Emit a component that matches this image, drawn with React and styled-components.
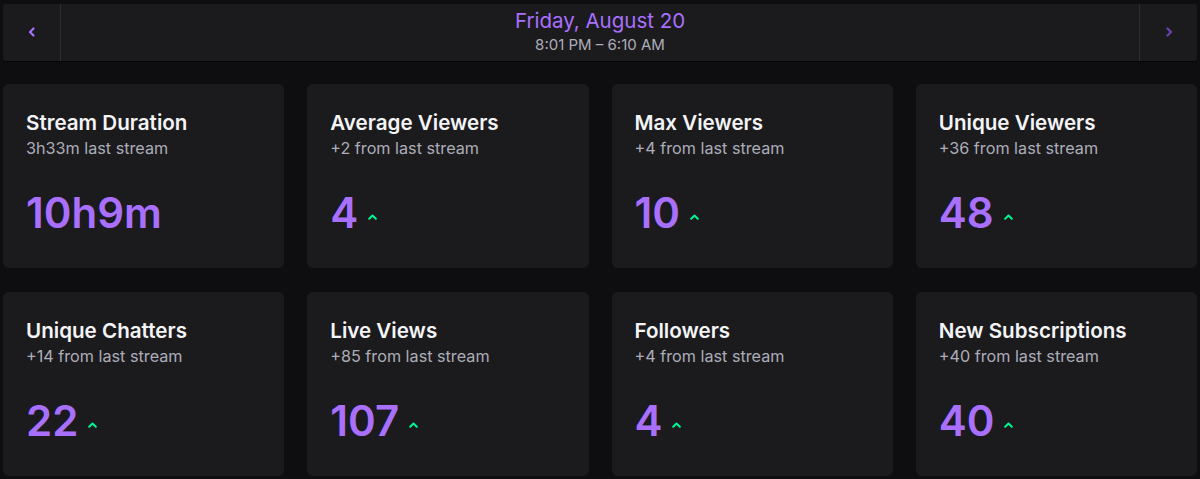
import React from 'react';
import styled, { createGlobalStyle } from 'styled-components';

const stats = [
  { title: 'Stream Duration', note: '3h33m last stream', value: '10h9m', up: false },
  { title: 'Average Viewers', note: '+2 from last stream', value: '4', up: true },
  { title: 'Max Viewers', note: '+4 from last stream', value: '10', up: true },
  { title: 'Unique Viewers', note: '+36 from last stream', value: '48', up: true },
  { title: 'Unique Chatters', note: '+14 from last stream', value: '22', up: true },
  { title: 'Live Views', note: '+85 from last stream', value: '107', up: true },
  { title: 'Followers', note: '+4 from last stream', value: '4', up: true },
  { title: 'New Subscriptions', note: '+40 from last stream', value: '40', up: true },
];

function Chevron({ dir, color }) {
  // small bold arrow for the date switcher
  const points = dir === 'left' ? '5.5,1.5 2,5 5.5,8.5' : '2.5,1.5 6,5 2.5,8.5';
  return (
    <svg width="8" height="10" viewBox="0 0 8 10">
      <polyline points={points} fill="none" stroke={color} strokeWidth="2.2" strokeLinecap="round" strokeLinejoin="round" />
    </svg>
  );
}

function UpArrow() {
  return (
    <svg width="9" height="6" viewBox="0 0 9 6">
      <polyline points="1.2,4.8 4.5,1.5 7.8,4.8" fill="none" stroke="#00f593" strokeWidth="2" strokeLinecap="round" strokeLinejoin="round" />
    </svg>
  );
}

function App() {
  return (
    <>
      <GlobalStyle />
      <Page>
        <DateBar>
          <NavButton>
            <Chevron dir="left" color="#a970ff" />
          </NavButton>
          <DateInfo>
            <DateTitle>Friday, August 20</DateTitle>
            <DateRange>8:01 PM – 6:10 AM</DateRange>
          </DateInfo>
          <NavButton $right>
            <Chevron dir="right" color="#6a45b0" />
          </NavButton>
        </DateBar>
        <CardGrid>
          {stats.map((s) => (
            <Card key={s.title}>
              <CardTitle>{s.title}</CardTitle>
              <CardNote>{s.note}</CardNote>
              <ValueRow>
                <Value>{s.value}</Value>
                {s.up && (
                  <Trend>
                    <UpArrow />
                  </Trend>
                )}
              </ValueRow>
            </Card>
          ))}
        </CardGrid>
      </Page>
    </>
  );
}

export default App;

const GlobalStyle = createGlobalStyle`
  html, body {
    margin: 0;
    background: #0e0e10;
    font-family: Inter, "Noto Sans", sans-serif;
  }
`;

const Page = styled.div`
  padding: 4px 3px 0;
  display: flex;
  flex-direction: column;
  gap: 23px;
`;

const DateBar = styled.div`
  display: flex;
  height: 57px;
  background: #1b1b1e;
  border-radius: 2px;
  box-shadow: 0 1px 0 #050506;
`;

const NavButton = styled.div`
  width: 57px;
  flex-shrink: 0;
  display: flex;
  align-items: center;
  justify-content: center;
  border-${(p) => (p.$right ? 'left' : 'right')}: 1px solid #2c2c31;
  padding-bottom: 1px;
`;

const DateInfo = styled.div`
  flex: 1;
  display: flex;
  flex-direction: column;
  align-items: center;
  padding-top: 5px;
`;

const DateTitle = styled.div`
  color: #a970ff;
  font-size: 20.5px;
  line-height: 24px;
`;

const DateRange = styled.div`
  color: #adadb8;
  font-size: 15px;
  line-height: 18px;
  margin-top: 3px;
`;

const CardGrid = styled.div`
  display: grid;
  grid-template-columns: repeat(4, 1fr);
  column-gap: 23px;
  row-gap: 24px;
`;

const Card = styled.div`
  height: 184px;
  box-sizing: border-box;
  background: #1b1b1e;
  border-radius: 6px;
  padding: 27px 23px 0;
  display: flex;
  flex-direction: column;
`;

const CardTitle = styled.div`
  color: #f4f4f6;
  font-size: 20.6px;
  line-height: 24px;
  font-weight: 600;
`;

const CardNote = styled.div`
  color: #adadb8;
  font-size: 16.2px;
  line-height: 24px;
  margin-top: 1px;
`;

const ValueRow = styled.div`
  display: flex;
  align-items: center;
  gap: 10px;
  margin-top: 32px;
`;

const Value = styled.div`
  color: #a970ff;
  font-size: 42px;
  line-height: 42px;
  font-weight: 600;
`;

const Trend = styled.span`
  display: flex;
  margin-top: 7px;
`;
